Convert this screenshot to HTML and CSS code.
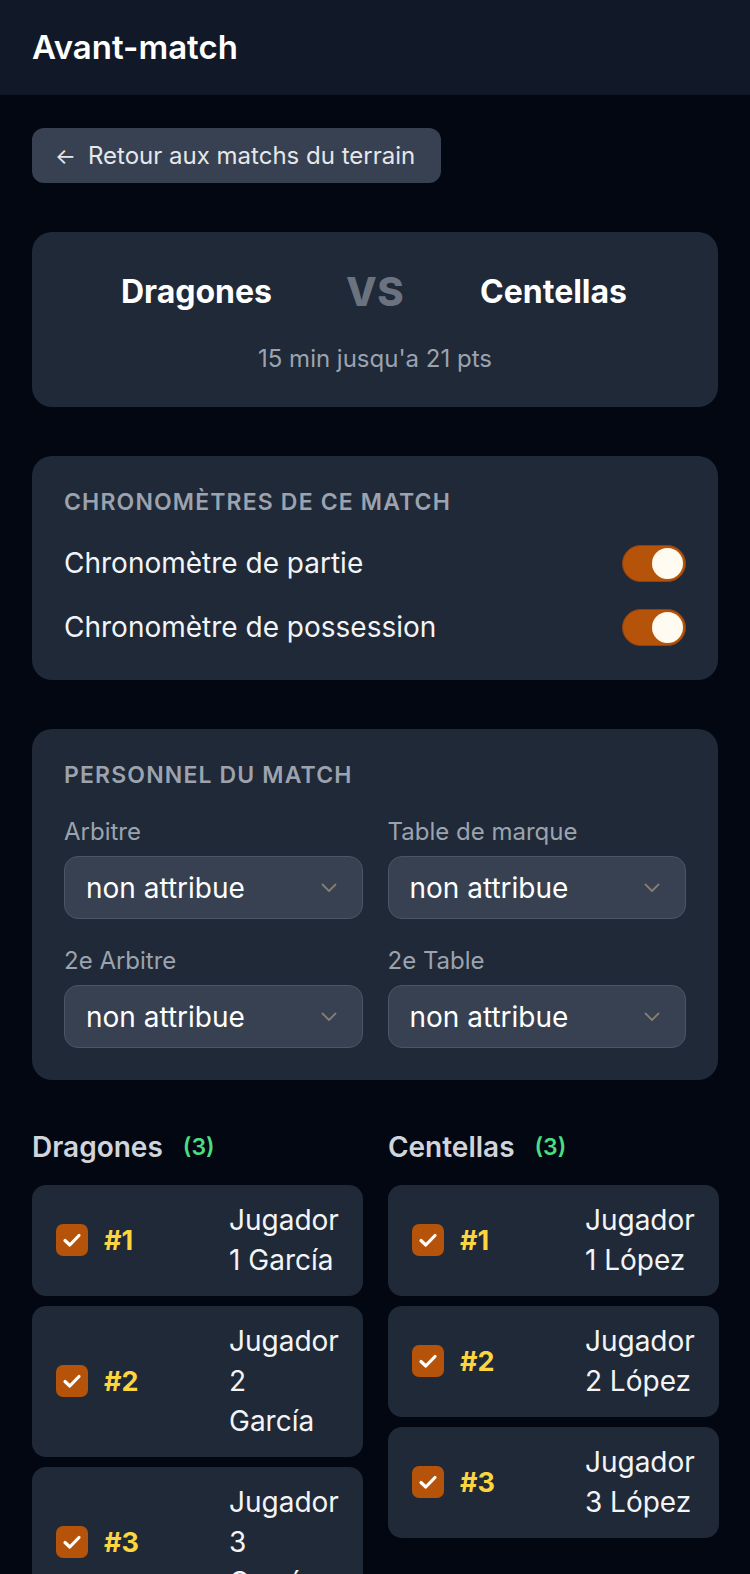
FILE: index.html
```html
<!DOCTYPE html>
<html lang="fr">
<head>
<meta charset="utf-8">
<title>Avant-match</title>
<link rel="stylesheet" href="styles.css">
</head>
<body>
<header class="topbar">
  <h1 class="topbar-title">Avant-match</h1>
</header>
<main class="page">
  <button class="back-btn" type="button"><span class="back-arrow">←</span> Retour aux matchs du terrain</button>

  <section class="card match-card">
    <div class="teams">
      <div class="team-name">Dragones</div>
      <div class="vs">VS</div>
      <div class="team-name">Centellas</div>
    </div>
    <div class="match-format">15 min jusqu'a 21 pts</div>
  </section>

  <section class="card timers-card">
    <h2 class="card-title">Chronomètres de ce match</h2>
    <div class="toggle-list">
      <div class="toggle-row">
        <span class="toggle-label">Chronomètre de partie</span>
        <span class="toggle on"><span class="knob"></span></span>
      </div>
      <div class="toggle-row">
        <span class="toggle-label">Chronomètre de possession</span>
        <span class="toggle on"><span class="knob"></span></span>
      </div>
    </div>
  </section>

  <section class="card staff-card">
    <h2 class="card-title">Personnel du match</h2>
    <div class="staff-grid">
      <div class="field">
        <div class="field-label">Arbitre</div>
        <div class="select"><span>non attribue</span><svg class="chev" viewBox="0 0 16 10" width="16" height="10"><path d="M1.5 1.5 L8 8 L14.5 1.5" fill="none" stroke="#877e72" stroke-width="1.8" stroke-linecap="round" stroke-linejoin="round"/></svg></div>
      </div>
      <div class="field">
        <div class="field-label">Table de marque</div>
        <div class="select"><span>non attribue</span><svg class="chev" viewBox="0 0 16 10" width="16" height="10"><path d="M1.5 1.5 L8 8 L14.5 1.5" fill="none" stroke="#877e72" stroke-width="1.8" stroke-linecap="round" stroke-linejoin="round"/></svg></div>
      </div>
      <div class="field">
        <div class="field-label">2e Arbitre</div>
        <div class="select"><span>non attribue</span><svg class="chev" viewBox="0 0 16 10" width="16" height="10"><path d="M1.5 1.5 L8 8 L14.5 1.5" fill="none" stroke="#877e72" stroke-width="1.8" stroke-linecap="round" stroke-linejoin="round"/></svg></div>
      </div>
      <div class="field">
        <div class="field-label">2e Table</div>
        <div class="select"><span>non attribue</span><svg class="chev" viewBox="0 0 16 10" width="16" height="10"><path d="M1.5 1.5 L8 8 L14.5 1.5" fill="none" stroke="#877e72" stroke-width="1.8" stroke-linecap="round" stroke-linejoin="round"/></svg></div>
      </div>
    </div>
  </section>

  <section class="rosters">
    <div class="roster">
      <h3 class="roster-title">Dragones <span class="count">(3)</span></h3>
      <div class="player-list">
        <div class="player">
          <span class="check"><svg viewBox="0 0 24 24" width="24" height="24"><path d="M5 12.5 L9.8 17 L19 7.5" fill="none" stroke="#fff" stroke-width="3.2" stroke-linecap="round" stroke-linejoin="round"/></svg></span>
          <span class="num">#1</span>
          <span class="pname">Jugador 1 García</span>
        </div>
        <div class="player">
          <span class="check"><svg viewBox="0 0 24 24" width="24" height="24"><path d="M5 12.5 L9.8 17 L19 7.5" fill="none" stroke="#fff" stroke-width="3.2" stroke-linecap="round" stroke-linejoin="round"/></svg></span>
          <span class="num">#2</span>
          <span class="pname">Jugador 2 García</span>
        </div>
        <div class="player">
          <span class="check"><svg viewBox="0 0 24 24" width="24" height="24"><path d="M5 12.5 L9.8 17 L19 7.5" fill="none" stroke="#fff" stroke-width="3.2" stroke-linecap="round" stroke-linejoin="round"/></svg></span>
          <span class="num">#3</span>
          <span class="pname">Jugador 3 García</span>
        </div>
      </div>
    </div>
    <div class="roster">
      <h3 class="roster-title">Centellas <span class="count">(3)</span></h3>
      <div class="player-list">
        <div class="player">
          <span class="check"><svg viewBox="0 0 24 24" width="24" height="24"><path d="M5 12.5 L9.8 17 L19 7.5" fill="none" stroke="#fff" stroke-width="3.2" stroke-linecap="round" stroke-linejoin="round"/></svg></span>
          <span class="num">#1</span>
          <span class="pname">Jugador 1 López</span>
        </div>
        <div class="player">
          <span class="check"><svg viewBox="0 0 24 24" width="24" height="24"><path d="M5 12.5 L9.8 17 L19 7.5" fill="none" stroke="#fff" stroke-width="3.2" stroke-linecap="round" stroke-linejoin="round"/></svg></span>
          <span class="num">#2</span>
          <span class="pname">Jugador 2 López</span>
        </div>
        <div class="player">
          <span class="check"><svg viewBox="0 0 24 24" width="24" height="24"><path d="M5 12.5 L9.8 17 L19 7.5" fill="none" stroke="#fff" stroke-width="3.2" stroke-linecap="round" stroke-linejoin="round"/></svg></span>
          <span class="num">#3</span>
          <span class="pname">Jugador 3 López</span>
        </div>
      </div>
    </div>
  </section>
</main>
</body>
</html>
```
FILE: styles.css
```css
* { box-sizing: border-box; }

html, body {
  margin: 0;
  padding: 0;
  background: #030712;
  color: #f9fafb;
  font-family: Inter, "Noto Sans", "Liberation Sans", sans-serif;
}

.topbar {
  height: 95px;
  background: #111827;
  display: flex;
  align-items: center;
  padding: 0 32px;
}

.topbar-title {
  margin: 0;
  font-size: 33px;
  font-weight: 600;
  color: #ffffff;
  line-height: 1;
}

.page {
  padding: 33px 32px 40px 32px;
  display: flex;
  flex-direction: column;
  align-items: stretch;
}

.back-btn {
  align-self: flex-start;
  height: 55px;
  padding: 0 26px 0 23px;
  border: none;
  border-radius: 12px;
  background: #374151;
  color: #e5e7eb;
  font-family: inherit;
  font-size: 24px;
  display: flex;
  align-items: center;
  gap: 12px;
}

.back-arrow { font-size: 22px; }

.card {
  background: #1f2937;
  border-radius: 20px;
  padding: 32px;
  margin-top: 49px;
}

.match-card {
  padding: 32px 32px 33px;
}

.teams {
  display: grid;
  grid-template-columns: 1fr auto 1fr;
  column-gap: 17px;
  align-items: center;
  height: 54px;
}

.team-name {
  text-align: center;
  font-size: 32px;
  font-weight: 700;
  color: #ffffff;
}

.vs {
  font-size: 40px;
  font-weight: 800;
  color: #6b7280;
  letter-spacing: 0.5px;
}

.match-format {
  margin-top: 26px;
  text-align: center;
  font-size: 24px;
  line-height: 30px;
  color: #9ca3af;
}

.card-title {
  margin: 0;
  font-size: 23px;
  line-height: 28px;
  font-weight: 600;
  text-transform: uppercase;
  letter-spacing: 0.05em;
  color: #9ca3af;
}

.timers-card {
  padding-bottom: 35px;
}

.toggle-list {
  margin-top: 29px;
  display: flex;
  flex-direction: column;
  gap: 28px;
}

.toggle-row {
  display: flex;
  align-items: center;
  justify-content: space-between;
  height: 36px;
}

.toggle-label {
  font-size: 28px;
  color: #f3f4f6;
}

.toggle {
  width: 64px;
  height: 37px;
  border-radius: 19px;
  background: #b45309;
  border: 1px solid #92400e;
  display: flex;
  align-items: center;
  justify-content: flex-end;
  padding: 2px;
}

.knob {
  width: 31px;
  height: 31px;
  border-radius: 50%;
  background: #fffbf0;
}

.staff-grid {
  margin-top: 29px;
  display: grid;
  grid-template-columns: 1fr 1fr;
  column-gap: 25px;
  row-gap: 28px;
}

.field-label {
  font-size: 24px;
  line-height: 28px;
  color: #9ca3af;
  margin-bottom: 10px;
}

.select {
  height: 63px;
  border-radius: 14px;
  background: #374151;
  border: 1.5px solid #4b5563;
  display: flex;
  align-items: center;
  justify-content: space-between;
  padding: 0 25px 0 21px;
  font-size: 28px;
  color: #ffffff;
}

.chev { flex: none; }

.rosters {
  margin-top: 48px;
  display: grid;
  grid-template-columns: 1fr 1fr;
  column-gap: 25px;
}

.roster-title {
  margin: 0;
  font-size: 28px;
  line-height: 38px;
  font-weight: 600;
  color: #d1d5db;
  display: flex;
  align-items: center;
  gap: 20px;
}

.count {
  font-size: 23px;
  font-weight: 600;
  color: #4ade80;
}

.player-list {
  margin-top: 19px;
  display: flex;
  flex-direction: column;
  gap: 10px;
}

.player {
  background: #1f2937;
  border-radius: 14px;
  padding: 15px 24px 16px;
  display: flex;
  align-items: center;
}

.check {
  flex: none;
  width: 32px;
  height: 32px;
  border-radius: 7px;
  background: #b45309;
  display: flex;
  align-items: center;
  justify-content: center;
}

.num {
  flex: none;
  width: 113px;
  margin-left: 16px;
  margin-right: 12px;
  font-size: 27px;
  font-weight: 700;
  color: #fcd53f;
}

.pname {
  flex: 1;
  min-width: 0;
  font-size: 28px;
  line-height: 40px;
  color: #f3f4f6;
}
```
